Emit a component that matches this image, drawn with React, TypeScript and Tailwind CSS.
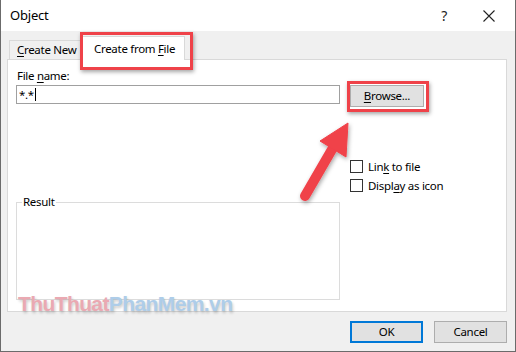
import React from "react";

const font = { fontFamily: '"Noto Sans", "Open Sans", sans-serif' };

function Key({ children }: { children: React.ReactNode }) {
  return <span className="underline underline-offset-2 decoration-1">{children}</span>;
}

function CheckRow({ children }: { children: React.ReactNode }) {
  return (
    <div className="flex items-center h-[13px] gap-[5px]">
      <div className="w-[13px] h-[13px] border border-[#333] bg-white" />
      <span className="leading-[13px]">{children}</span>
    </div>
  );
}

export default function App() {
  return (
    <div
      className="relative w-[516px] h-[352px] overflow-hidden bg-[#f0f0f0] border-x border-b border-[#6b6b6b] text-[11.5px] text-black tracking-[-0.3px]"
      style={font}
    >
      {/* Title bar */}
      <div className="h-[31px] bg-white flex items-center pl-[9px] pr-[14px]">
        <span className="text-[13px] tracking-[-0.2px]">Object</span>
        <span className="ml-auto mr-[36px] text-[14px] text-[#222]">?</span>
        <svg width="12" height="12" viewBox="0 0 12 12" className="mr-[6px]">
          <path d="M0.5 0.5 L11.5 11.5 M11.5 0.5 L0.5 11.5" stroke="#222" strokeWidth="1.1" />
        </svg>
      </div>

      {/* Body */}
      <div className="pl-[6px] pr-[8px]">
        {/* Tabs */}
        <div className="flex items-end h-[28px] pl-[2px] relative z-10">
          <div className="w-[72px] h-[19px] border border-b-0 border-[#d9d9d9] bg-[#f0f0f0] flex items-center pl-[7px]">
            <span><Key>C</Key>reate New</span>
          </div>
          <div className="w-[104px] h-[24px] border border-b-0 border-[#d9d9d9] bg-white flex items-start pt-[3px] pl-[12px] -mb-[1px]">
            <span>Create from <Key>F</Key>ile</span>
          </div>
        </div>

        {/* Panel */}
        <div className="h-[253px] border border-[#d9d9d9] bg-white flex pl-[8px] pt-[8px]">
          <div className="w-[324px] flex flex-col">
            <div className="pl-[1px] leading-[16px]">
              File <Key>n</Key>ame:
            </div>
            <div className="mt-[1px] h-[19px] border border-[#a0a0a0] flex items-center pl-[2px]">
              <span className="leading-[14px]">*.*</span>
              <span className="w-px h-[13px] bg-black ml-[1px]" />
            </div>
            <div className="mt-[98px] h-[98px] border border-[#dcdcdc] relative">
              <span className="absolute -top-[9px] left-[5px] bg-white px-px leading-[16px]">Result</span>
            </div>
          </div>
          <div className="ml-[10px] flex flex-col pt-[17px]">
            <div className="w-[74px] h-[22px] bg-[#e1e1e1] border border-[#adadad] flex items-center justify-center">
              <span><Key>B</Key>rowse...</span>
            </div>
            <div className="mt-[53px] flex flex-col gap-[6px]">
              <CheckRow>Lin<Key>k</Key> to file</CheckRow>
              <CheckRow>Displ<Key>a</Key>y as icon</CheckRow>
            </div>
          </div>
        </div>

        {/* Buttons */}
        <div className="flex justify-end gap-[11px] mt-[9px]">
          <div className="w-[73px] h-[22px] bg-[#e1e1e1] border-2 border-[#0078d7] flex items-center justify-center">
            OK
          </div>
          <div className="w-[73px] h-[22px] bg-[#e1e1e1] border border-[#adadad] flex items-center justify-center">
            Cancel
          </div>
        </div>
      </div>

      {/* Red highlight boxes */}
      <div className="absolute left-[79px] top-[32px] w-[113px] h-[38px] border-[3px] border-[#ef4249] shadow-[1px_2px_4px_rgba(0,0,0,0.35)] z-20" />
      <div className="absolute left-[346px] top-[81px] w-[82px] h-[31px] border-[3px] border-[#ef4249] shadow-[1px_2px_4px_rgba(0,0,0,0.35)] z-20" />

      {/* Arrow */}
      <svg className="absolute left-0 top-0 z-20" width="516" height="352" viewBox="0 0 516 352">
        <defs>
          <filter id="sh" x="-20%" y="-20%" width="140%" height="140%">
            <feDropShadow dx="1" dy="2" stdDeviation="2" floodColor="#000" floodOpacity="0.35" />
          </filter>
        </defs>
        <g filter="url(#sh)" fill="#f0424a" stroke="#f0424a">
          <line x1="304" y1="196" x2="333" y2="146" strokeWidth="10" strokeLinecap="round" />
          <polygon points="347,123 319,141 345,157" strokeWidth="1" strokeLinejoin="round" />
        </g>
      </svg>

      {/* Watermark */}
      <div
        className="absolute left-[17px] top-[291px] z-20 text-[21px] font-bold tracking-[-0.6px] leading-[26px] whitespace-nowrap [text-shadow:1px_2px_3px_rgba(0,0,0,0.22)]"
        style={{ fontFamily: '"Liberation Sans", Arial, sans-serif' }}
      >
        <span className="text-[#eaa9b2]">ThuThuat</span>
        <span className="text-[#aecde9]">PhanMem.vn</span>
      </div>
    </div>
  );
}
